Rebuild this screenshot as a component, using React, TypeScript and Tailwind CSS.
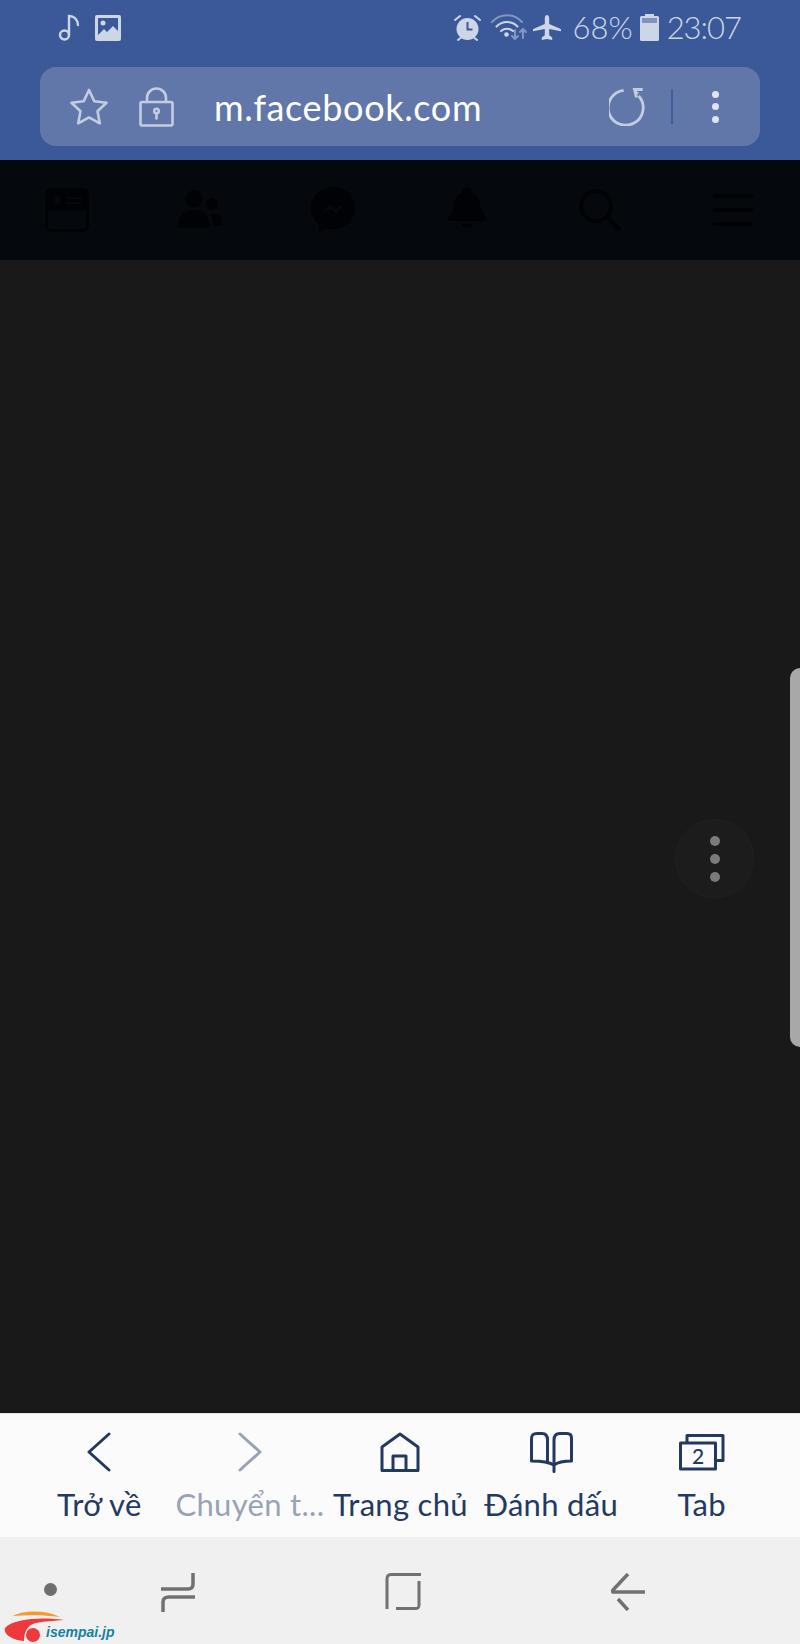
import React from 'react';

// Status bar icons
const MusicIcon = () => (
  <svg width="22" height="27" viewBox="0 0 22 27" fill="none" stroke="#cdd6e6" strokeWidth="2.4" strokeLinecap="round">
    <circle cx="6.5" cy="21" r="4.5" />
    <path d="M11 21V2c5 0 8.5 3.5 9 9" />
  </svg>
);

const ImageIcon = () => (
  <svg width="26" height="26" viewBox="0 0 26 26">
    <rect width="26" height="26" rx="2" fill="#cdd6e6" />
    <rect x="3" y="3" width="20" height="20" fill="#3b5998" />
    <circle cx="8" cy="8" r="2.5" fill="#cdd6e6" />
    <path d="M3 20l6-6 3 3 6-6 5 5v7H3z" fill="#cdd6e6" />
  </svg>
);

const AlarmIcon = () => (
  <svg width="27" height="28" viewBox="0 0 27 28">
    <circle cx="13.5" cy="15" r="11" fill="#cdd6e6" />
    <path d="M13.5 8v7.5h5" fill="none" stroke="#3b5998" strokeWidth="2" />
    <path d="M1 6l5-4M26 6l-5-4M4 26l2.5-2M23 26l-2.5-2" stroke="#cdd6e6" strokeWidth="2" strokeLinecap="round" />
  </svg>
);

const WifiIcon = () => (
  <svg width="36" height="27" viewBox="0 0 36 27" fill="none" strokeLinecap="round">
    <path d="M1 8c8-9 22-9 30 0" stroke="#8497bf" strokeWidth="2" />
    <path d="M5.500 12.500c6-6 15-6 21 0" stroke="#cdd6e6" strokeWidth="2" />
    <path d="M10 17c3.500-3 8.500-3 12 0" stroke="#cdd6e6" strokeWidth="2" />
    <circle cx="15.500" cy="20.500" r="2.300" fill="#cdd6e6" />
    <path d="M24 16v9M21 22l3 3 3-3" stroke="#8497bf" strokeWidth="2" />
    <path d="M32 24v-9M29 18l3-3 3 3" stroke="#8497bf" strokeWidth="2" />
  </svg>
);

const PlaneIcon = () => (
  <svg width="28" height="26" viewBox="0 0 28 26" fill="#cdd6e6">
    <path d="M14 0c1.300 0 2.200 1.500 2.200 3.500V9l11 4.800c.5.300.8.700.8 1.200v1.200l-11.800-2.200v6.300l3 2.200V25L14 24l-5.200 1v-2.500l3-2.200V14L0 16.200V15c0-.5.300-.9.800-1.200l11-4.800V3.500C11.800 1.500 12.700 0 14 0z" />
  </svg>
);

const BatteryIcon = () => (
  <svg width="19" height="27" viewBox="0 0 19 27">
    <rect x="5" y="0" width="9" height="3" fill="#cdd6e6" />
    <rect x="0" y="2" width="19" height="25" rx="1.500" fill="#cdd6e6" />
    <rect x="2" y="4" width="15" height="5" fill="#7f93bd" />
  </svg>
);

// Address bar icons
const StarIcon = () => (
  <svg width="38" height="38" viewBox="0 0 38 38" fill="none" stroke="#c3cde0" strokeWidth="2.600" strokeLinejoin="round">
    <path d="M19 2l5.300 11.200 12.200 1.600-9 8.400 2.300 12.100L19 29.400 8.200 35.300l2.300-12.100-9-8.400 12.200-1.600z" />
  </svg>
);

const LockIcon = () => (
  <svg width="35" height="40" viewBox="0 0 35 40" fill="none" stroke="#c3cde0" strokeWidth="2.600" strokeLinecap="round">
    <rect x="1.500" y="15" width="32" height="23.500" rx="1.500" />
    <path d="M8 15V11a9.500 9.500 0 0 1 19 0v4" />
    <circle cx="17.500" cy="24" r="2.300" />
    <path d="M17.500 26.500v5" />
  </svg>
);

const ReloadIcon = () => (
  <svg width="40" height="38" viewBox="0 0 40 38" fill="none" stroke="#c3cde0" strokeWidth="2.800">
    <path d="M14.700 2.300A17.500 17.500 0 1 0 29.700 8" />
    <path d="M33.700 1.500H25.500L27.500 9.500" />
    <path d="M26 2l4 3-3 2z" fill="#c3cde0" stroke="none" />
  </svg>
);

// Dimmed page navigation icons
const FeedIcon = () => (
  <svg width="44" height="44" viewBox="0 0 44 44">
    <rect x="1.500" y="1.500" width="41" height="41" rx="5" fill="none" stroke="#010205" strokeWidth="3" />
    <rect x="1.500" y="1.500" width="41" height="21" rx="4" fill="#010205" />
    <circle cx="11.500" cy="12" r="4" fill="#05080d" />
    <rect x="21" y="9" width="16" height="2" fill="#05080d" />
    <rect x="21" y="14" width="16" height="2" fill="#05080d" />
  </svg>
);

const FriendsIcon = () => (
  <svg width="44" height="40" viewBox="0 0 44 40" fill="#010205">
    <circle cx="16" cy="9" r="8.500" />
    <path d="M0 35c0-9 6-15 16-15s15 6 15 15c0 2-1 3-3 3H3c-2 0-3-1-3-3z" />
    <circle cx="34" cy="14" r="6" />
    <path d="M31 24h6c4 0 7 3 7 7 0 3-1.500 5-4 5h-5c.5-4-1-9-4-12z" />
  </svg>
);

const MessengerIcon = () => (
  <svg width="44" height="46" viewBox="0 0 44 46">
    <path d="M22 0C10 0 0 9 0 21c0 7 3 12.500 8 16.500V46l7.500-5c2 .6 4.300.9 6.500.9 12 0 22-9 22-20.900S34 0 22 0z" fill="#010205" />
    <path d="M10 27l9-10 5 5 10-5-9 10-5-5z" fill="#05080d" />
  </svg>
);

const BellIcon = () => (
  <svg width="38" height="44" viewBox="0 0 38 44" fill="#010205">
    <path d="M19 0c3 0 5 2 5 4.500C31 7 32 14 33 22c.5 3 5 5 5 8 0 2-1 3-3 3H3c-2 0-3-1-3-3 0-3 4.500-5 5-8C6 14 7 7 14 4.500 14 2 16 0 19 0z" />
    <path d="M13 36h12c-1 5-11 5-12 0z" />
  </svg>
);

const SearchIcon = () => (
  <svg width="44" height="44" viewBox="0 0 44 44" fill="none" stroke="#010205" strokeWidth="4" strokeLinecap="round">
    <circle cx="18" cy="18" r="15" />
    <path d="M29 29l12 12" />
  </svg>
);

const MenuIcon = () => (
  <svg width="40" height="34" viewBox="0 0 40 34" fill="#010205">
    <rect width="40" height="4" y="1" rx="1" />
    <rect width="40" height="4" y="15" rx="1" />
    <rect width="40" height="4" y="29" rx="1" />
  </svg>
);

// Bottom toolbar icons
const NAVY = '#24395f';

const ToolbarChevron = ({ right, color }: { right?: boolean; color: string }) => (
  <svg width="24" height="40" viewBox="0 0 24 40" fill="none" stroke={color} strokeWidth="3" strokeLinecap="round" strokeLinejoin="round">
    <path d={right ? 'M2 2l20 18L2 38' : 'M22 2L2 20l20 18'} />
  </svg>
);

const HomeIcon = () => (
  <svg width="40" height="40" viewBox="0 0 40 40" fill="none" stroke={NAVY} strokeWidth="3" strokeLinejoin="round">
    <path d="M2 38.500V15L20 2l18 13v23.500z" />
    <path d="M13 38.500V24h13v14.500" />
  </svg>
);

const BookIcon = () => (
  <svg width="44" height="42" viewBox="0 0 44 42" fill="none" stroke={NAVY} strokeWidth="3" strokeLinecap="round" strokeLinejoin="round">
    <path d="M25 34C20 31 12 30 2.500 30V8C2.500 4 4 2.500 8 2.500H13C16.500 2.500 18.500 5 18.500 9V31" />
    <path d="M25 40.500V9C25 5 27 2.500 31 2.500H38C41 2.500 42.500 4 42.500 7V30C35 30 29 31 25 34" />
  </svg>
);

const TabsIcon = () => (
  <svg width="46" height="37" viewBox="0 0 46 37" fill="none" stroke={NAVY} strokeWidth="3" strokeLinejoin="round">
    <path d="M8 9V1.500h36v25h-8" />
    <rect x="1.500" y="9" width="35" height="26" />
    <text x="19" y="30" textAnchor="middle" fill={NAVY} stroke="none" fontSize="21" fontWeight="500" fontFamily="Lato, sans-serif">2</text>
  </svg>
);

const toolbarItems: { label: string; icon: React.ReactNode; muted?: boolean }[] = [
  { label: 'Trở về', icon: <ToolbarChevron color={NAVY} /> },
  { label: 'Chuyển t...', icon: <ToolbarChevron right color="#98a3b6" />, muted: true },
  { label: 'Trang chủ', icon: <HomeIcon /> },
  { label: 'Đánh dấu', icon: <BookIcon /> },
  { label: 'Tab', icon: <TabsIcon /> },
];

const App: React.FC = () => {
  return (
    <div className="relative flex flex-col h-[1644px] w-full overflow-hidden font-['Lato','Noto_Sans',sans-serif]">
      {/* Browser chrome */}
      <header className="h-[160px] bg-[#3b5998] flex flex-col">
        <div className="flex items-center h-[27px] mt-[14px] pl-[58px] pr-[59px]">
          <MusicIcon />
          <div className="ml-[15px]"><ImageIcon /></div>
          <div className="ml-auto flex items-center">
            <AlarmIcon />
            <div className="ml-[10px]"><WifiIcon /></div>
            <div className="ml-[6px]"><PlaneIcon /></div>
            <span className="ml-[12px] text-[31px] leading-[27px] font-light text-[#cdd6e6]">68%</span>
            <div className="ml-[7px]"><BatteryIcon /></div>
            <span className="ml-[8px] text-[31px] leading-[27px] tracking-[-1px] font-light text-[#cdd6e6]">23:07</span>
          </div>
        </div>
        <div className="mt-[26px] mx-[40px] h-[79px] rounded-[16px] bg-[#6177aa] flex items-center pl-[30px] pr-[41px]">
          <StarIcon />
          <div className="ml-[31px]"><LockIcon /></div>
          <span className="ml-[40px] text-[36px] tracking-[0.65px] text-white">m.facebook.com</span>
          <div className="ml-auto"><ReloadIcon /></div>
          <div className="ml-[22px] w-[2px] h-[35px] bg-[#3f5d9e]" />
          <div className="ml-[39px] flex flex-col gap-[5.500px]">
            <span className="w-[7px] h-[7px] rounded-full bg-[#dfe4ee]" />
            <span className="w-[7px] h-[7px] rounded-full bg-[#dfe4ee]" />
            <span className="w-[7px] h-[7px] rounded-full bg-[#dfe4ee]" />
          </div>
        </div>
      </header>

      {/* Dimmed page nav */}
      <nav className="h-[100px] bg-[#05080d] grid grid-cols-6 items-center justify-items-center">
        <FeedIcon />
        <FriendsIcon />
        <MessengerIcon />
        <BellIcon />
        <SearchIcon />
        <MenuIcon />
      </nav>

      <main className="flex-1 bg-[#191919]" />

      {/* Browser toolbar */}
      <div className="h-[124px] bg-[#fbfbfb] border-t border-[#e4e4e4] grid grid-cols-5 pl-[24px] pr-[23px]">
        {toolbarItems.map((item) => (
          <div key={item.label} className="flex flex-col items-center pt-[17px]">
            <div className="h-[42px] flex items-center justify-center">{item.icon}</div>
            <span className={`mt-[11px] text-[31px] leading-[40px] tracking-[0.3px] whitespace-nowrap ${item.muted ? 'text-[#98a3b6]' : 'text-[#24395f]'}`}>
              {item.label}
            </span>
          </div>
        ))}
      </div>

      {/* Android navigation bar */}
      <div className="h-[107px] bg-[#f0f0f0] flex items-start pl-[44px] pt-[36px]">
        <span className="mt-[10px] w-[13px] h-[13px] rounded-full bg-[#6e6e6e]" />
        <svg className="ml-[104px]" width="34" height="39" viewBox="0 0 34 39" fill="none" stroke="#717171" strokeWidth="3.500">
          <path d="M0 16h27c4 0 5-2 5-5V0M34 24H8c-4 0-6 2-6 5v10" />
        </svg>
        <svg className="ml-[190px]" width="36" height="37" viewBox="0 0 36 37" fill="none" stroke="#717171" strokeWidth="3">
          <path d="M2 36V6c0-3 1-4.500 4-4.500h30M34 8v24c0 3-1 3.500-4 3.500H11" />
        </svg>
        <svg className="ml-[190px]" width="34" height="38" viewBox="0 0 34 38" fill="none" stroke="#717171" strokeWidth="3.500">
          <path d="M17 1L2 17c-.8 1-.8 1.500 0 2h32M7 26l10 11" />
        </svg>
      </div>

      {/* Edge panel handle */}
      <div className="absolute right-0 top-[668px] w-[10px] h-[379px] rounded-l-[12px] bg-[#a8a8a8]" />

      {/* Floating menu button */}
      <div className="absolute left-[675px] top-[819px] w-[79px] h-[79px] rounded-full bg-[#1c1c1c] border border-[#212121] flex flex-col items-center justify-center gap-[8px]">
        <span className="w-[10px] h-[10px] rounded-full bg-[#7b7b7b]" />
        <span className="w-[10px] h-[10px] rounded-full bg-[#7b7b7b]" />
        <span className="w-[10px] h-[10px] rounded-full bg-[#7b7b7b]" />
      </div>

      {/* Watermark */}
      <div className="absolute left-[4px] bottom-0 flex items-end h-[34px]">
        <svg width="62" height="34" viewBox="0 0 62 34">
          <path d="M9 6C20 0 42 0 56 7 40 5 24 5 9 6z" fill="#f79a2e" />
          <path d="M60 10C40 7 10 8 1 18C-1 24 8 30 20 31C20 24 22 15 32 13C42 11 50 11 60 10z" fill="#ee3a3c" />
          <circle cx="29" cy="25" r="7" fill="#ee3a3c" />
        </svg>
        <span className="ml-[-20px] mb-[2px] text-[14px] leading-[20px] font-bold italic text-[#17809e] font-['Liberation_Sans',sans-serif]">isempai.jp</span>
      </div>
    </div>
  );
};

export default App;
